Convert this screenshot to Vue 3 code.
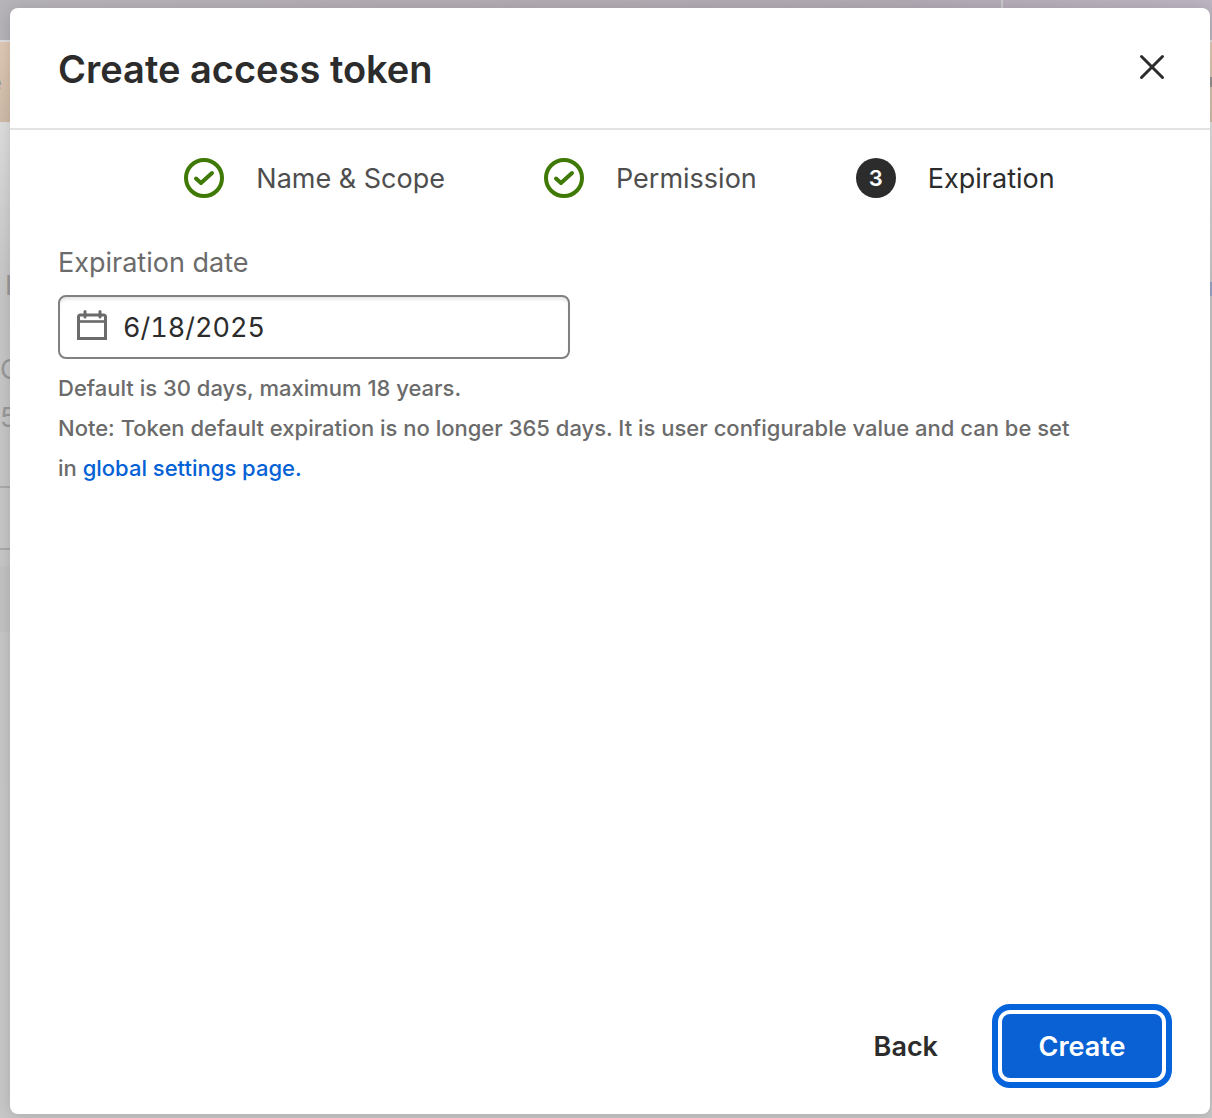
<script setup>
import { ref } from 'vue'

const steps = [
  { id: 1, label: 'Name & Scope', done: true },
  { id: 2, label: 'Permission', done: true },
  { id: 3, label: 'Expiration', done: false },
]
const expiration = ref('6/18/2025')
</script>

<template>
  <div class="app">
    <div class="page" aria-hidden="true">
      <div class="topbar"><span class="topbar-split"></span></div>
      <div class="banner"><span class="banner-text">e</span><span class="banner-dot"></span></div>
      <div class="page-body">
        <div class="page-left">
          <span class="frag heading">I</span>
          <span class="frag count">C</span>
          <span class="frag digit">5</span>
          <div class="table-row"></div>
          <div class="table-block"></div>
        </div>
        <span class="page-link"></span>
      </div>
    </div>

    <div class="overlay">
      <section class="dialog" role="dialog" aria-modal="true" aria-labelledby="dialog-title">
        <header class="dialog-header">
          <h1 id="dialog-title">Create access token</h1>
          <button class="close" type="button" aria-label="Close">
            <svg width="28" height="30" viewBox="0 0 28 30" fill="none" stroke="#2c2c2c" stroke-width="3" stroke-linecap="round">
              <path d="M3.5 3.5 24.5 24.5M24.5 3.5 3.5 24.5" />
            </svg>
          </button>
        </header>

        <ol class="steps">
          <li v-for="step in steps" :key="step.id" class="step" :class="{ current: !step.done }">
            <svg v-if="step.done" class="badge" viewBox="0 0 40 40" fill="none" stroke="#407a06" stroke-width="4">
              <circle cx="20" cy="20" r="18" />
              <path d="M12 20.5 17 25 28 15" stroke-linecap="round" stroke-linejoin="round" />
            </svg>
            <span v-else class="badge number">{{ step.id }}</span>
            <span class="step-label">{{ step.label }}</span>
          </li>
        </ol>

        <main class="dialog-body">
          <label for="expiration">Expiration date</label>
          <div class="date-field">
            <svg width="30" height="34" viewBox="0 0 30 34" fill="none" stroke="#6b6b6b">
              <path d="M1.5 28.5V7Q1.5 5 3.5 5H26.5Q28.5 5 28.5 7V28.5Z" stroke-width="3" />
              <path d="M1.5 11.5H28.5" stroke-width="2.6" />
              <path d="M8 1.5V7M23 1.5V7" stroke-width="3" stroke-linecap="round" />
            </svg>
            <input id="expiration" v-model="expiration" type="text" />
          </div>
          <p class="help">Default is 30 days, maximum 18 years.</p>
          <p class="help">
            Note: Token default expiration is no longer 365 days. It is user configurable value and can be set
            in <a href="#settings">global settings page.</a>
          </p>
        </main>

        <footer class="dialog-footer">
          <button class="back" type="button">Back</button>
          <button class="create" type="button">Create</button>
        </footer>
      </section>
    </div>
  </div>
</template>

<style>
body {
  margin: 0;
}
</style>

<style scoped>
* {
  box-sizing: border-box;
}
.app {
  position: relative;
  min-height: 100vh;
  font-family: Inter, "Liberation Sans", sans-serif;
  color: #2c2c2c;
}
button {
  border: 0;
  background: none;
  font: inherit;
  color: inherit;
  padding: 0;
}
.page {
  position: absolute;
  inset: 0;
  overflow: hidden;
  display: flex;
  flex-direction: column;
  background: #c5c5c5;
}
.topbar {
  height: 42px;
  flex: none;
  display: flex;
  justify-content: flex-end;
  padding-right: 209px;
  background: linear-gradient(90deg, #b6b3b9, #b3acb2 40%, #b2aab3 75%, #bcb5c2);
  border-bottom: 2px solid #dedee0;
}
.topbar-split {
  width: 2px;
  background: #c9c9cb;
}
.banner {
  height: 80px;
  flex: none;
  display: flex;
  align-items: center;
  justify-content: space-between;
  background: linear-gradient(#e0c9b5, #cfbba8);
}
.banner-text {
  width: 2px;
  display: flex;
  justify-content: flex-end;
  overflow: hidden;
  font-size: 24px;
  color: #999;
}
.banner-dot {
  width: 2px;
  height: 10px;
  background: #96928f;
}
.page-body {
  flex: 1;
  display: flex;
  justify-content: space-between;
  background: linear-gradient(#dedede, #c6c6c6 170px, #c8c8c8);
}
.page-left {
  width: 10px;
  overflow: hidden;
  padding-top: 148px;
  display: flex;
  flex-direction: column;
}
.frag {
  font-size: 27px;
  line-height: 32px;
  color: #999;
}
.heading {
  padding-left: 5px;
}
.count {
  margin-top: 52px;
}
.digit {
  margin-top: 16px;
}
.table-row {
  flex: none;
  height: 64px;
  margin-top: 52px;
  border-top: 2px solid #aaa;
  border-bottom: 2px solid #aaa;
}
.table-block {
  flex: none;
  height: 66px;
  margin-top: 16px;
  background: #c2c2c2;
}
.page-link {
  width: 2px;
  height: 14px;
  margin-top: 160px;
  background: #96a5c4;
}
.overlay {
  position: relative;
  min-height: 100vh;
  padding: 8px 2px 4px 10px;
  display: flex;
}
.dialog {
  flex: 1;
  display: flex;
  flex-direction: column;
  background: #fff;
  border-radius: 8px;
  box-shadow: 0 2px 16px rgba(0, 0, 0, 0.15);
}
.dialog-header {
  height: 122px;
  display: flex;
  align-items: center;
  justify-content: space-between;
  padding: 0 44px 0 48px;
  border-bottom: 2px solid #e3e3e3;
}
h1 {
  margin: 0;
  padding-top: 2px;
  font-size: 38px;
  line-height: 48px;
  font-weight: 600;
}
.close {
  display: flex;
}
.steps {
  list-style: none;
  margin: 0;
  padding: 28px 0 0 19px;
  display: flex;
  justify-content: center;
  gap: 99px;
}
.step {
  display: flex;
  align-items: center;
  gap: 32px;
  font-size: 27px;
  line-height: 40px;
  color: #4e4e4e;
}
.step-label {
  padding-top: 2px;
  line-height: 38px;
}
.current {
  color: #2c2c2c;
}
.badge {
  width: 40px;
  height: 40px;
  flex: none;
}
.number {
  border-radius: 50%;
  background: #2c2c2c;
  color: #fff;
  font-size: 22px;
  font-weight: 600;
  text-align: center;
}
.dialog-body {
  flex: 1;
  padding: 44px 48px;
}
label {
  display: block;
  padding-top: 2px;
  font-size: 27px;
  line-height: 38px;
  color: #6b6b6b;
}
.date-field {
  display: flex;
  align-items: center;
  gap: 16px;
  width: 512px;
  max-width: 100%;
  height: 64px;
  margin: 13px 0 9px;
  padding: 0 17px;
  border: 2px solid #818181;
  border-radius: 8px;
  box-shadow: inset 0 4px 4px -2px rgba(0, 0, 0, 0.12);
}
.date-field input {
  flex: 1;
  min-width: 0;
  padding: 0;
  border: 0;
  outline: 0;
  background: none;
  font: inherit;
  font-size: 27px;
  font-variant-numeric: tabular-nums;
  color: #2c2c2c;
}
.help {
  max-width: 1028px;
  margin: 0;
  font-size: 22px;
  line-height: 40px;
  font-weight: 500;
  color: #6b6b6b;
}
.help a {
  color: #0561d6;
  text-decoration: none;
}
.dialog-footer {
  display: flex;
  justify-content: flex-end;
  align-items: center;
  gap: 64px;
  padding: 0 48px 36px;
  font-size: 27px;
  line-height: 62px;
  font-weight: 600;
}
.dialog-footer button {
  padding-top: 2px;
}
.create {
  width: 160px;
  border-radius: 8px;
  background: #0961d3;
  color: #fff;
  box-shadow: 0 0 0 4px #fff, 0 0 0 10px #0563dc;
}
</style>
